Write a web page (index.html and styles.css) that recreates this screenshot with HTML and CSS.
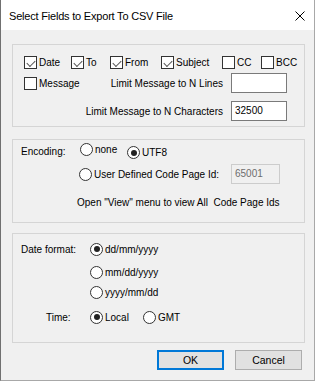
FILE: index.html
```html
<!DOCTYPE html>
<html>
<head>
<meta charset="utf-8">
<link rel="stylesheet" href="styles.css">
</head>
<body>
<div class="window">
  <div class="titlebar">
    <span class="title">Select Fields to Export To CSV File</span>
    <svg class="close" width="10" height="10" viewBox="0 0 10 10"><path d="M0.5 0.5 L9.5 9.5 M9.5 0.5 L0.5 9.5" stroke="#000" stroke-width="1"/></svg>
  </div>
  <div class="content">
    <div class="group g1">
      <div class="row r1">
        <label class="chk w-date"><span class="box on"></span><span>Date</span></label>
        <label class="chk w-to"><span class="box on"></span><span>To</span></label>
        <label class="chk w-from"><span class="box on"></span><span>From</span></label>
        <label class="chk w-subj"><span class="box on"></span><span>Subject</span></label>
        <label class="chk w-cc"><span class="box"></span><span>CC</span></label>
        <label class="chk"><span class="box"></span><span>BCC</span></label>
      </div>
      <div class="row r2">
        <label class="chk"><span class="box"></span><span>Message</span></label>
        <span class="rlabel">Limit Message to N Lines</span>
        <span class="input"></span>
      </div>
      <div class="row r3">
        <span class="rlabel">Limit Message to N Characters</span>
        <span class="input">32500</span>
      </div>
    </div>

    <div class="group g2">
      <div class="row e1">
        <span class="lbl w-enc">Encoding:</span>
        <label class="rad w-none up"><span class="circ"></span><span>none</span></label>
        <label class="rad down"><span class="circ on"></span><span>UTF8</span></label>
      </div>
      <div class="row e2">
        <label class="rad w-user"><span class="circ"></span><span>User Defined Code Page Id:</span></label>
        <span class="input disabled">65001</span>
      </div>
      <div class="row e3">
        <span class="lbl">Open "View" menu to view All&nbsp; Code Page Ids</span>
      </div>
    </div>

    <div class="group g3">
      <div class="row d1">
        <span class="lbl w-df">Date format:</span>
        <label class="rad"><span class="circ on"></span><span>dd/mm/yyyy</span></label>
      </div>
      <div class="row d2">
        <label class="rad"><span class="circ"></span><span>mm/dd/yyyy</span></label>
      </div>
      <div class="row d3">
        <label class="rad"><span class="circ"></span><span>yyyy/mm/dd</span></label>
      </div>
      <div class="row d4">
        <span class="lbl w-time">Time:</span>
        <label class="rad w-local"><span class="circ on"></span><span>Local</span></label>
        <label class="rad"><span class="circ"></span><span>GMT</span></label>
      </div>
    </div>

    <div class="buttons">
      <span class="btn default">OK</span>
      <span class="btn">Cancel</span>
    </div>
  </div>
</div>
</body>
</html>
```

FILE: styles.css
```css
* { box-sizing: border-box; }
html, body { margin: 0; padding: 0; }
body {
  width: 315px;
  height: 381px;
  background: #f0f0f0;
  overflow: hidden;
  font-family: "Liberation Sans", Arial, sans-serif;
  font-size: 10px;
  color: #000;
}
.window {
  width: 315px;
  height: 381px;
  border-left: 1px solid #707070;
  border-right: 1px solid #a8a8a8;
  border-bottom: 1px solid #a8a8a8;
  background: #f0f0f0;
}
.titlebar {
  height: 30px;
  background: #fff;
  display: flex;
  align-items: center;
  padding-left: 8px;
  padding-right: 9px;
}
.title {
  font-size: 11px;
  letter-spacing: -0.2px;
  flex: 1;
  padding-top: 1px;
}
.close { display: block; margin-top: 1px; }
.content {
  padding: 14px 0 0 11px;
}
.group {
  width: 293px;
  border: 1px solid #d5d5d5;
}
.g1 { height: 83px; padding: 7px 17px 0 11px; }
.g2 { height: 84px; margin-top: 12px; padding: 1px 17px 0 8px; }
.g3 { height: 110px; margin-top: 10px; padding: 5px 17px 0 8px; }
.row {
  display: flex;
  align-items: center;
  height: 20px;
  white-space: nowrap;
}
.row > * { flex: none; }
.r2 { margin-top: 1px; }
.r3 { margin-top: 8px; }
.e2 { margin-top: 3px; padding-left: 58px; }
.e3 { margin-top: 8px; padding-left: 56px; }
.d2 { margin-top: 3px; padding-left: 69px; }
.d3 { padding-left: 69px; }
.d4 { margin-top: 5px; }

.chk, .rad { display: flex; align-items: center; }
.box {
  width: 13px; height: 13px;
  border: 1px solid #333;
  background: #fff;
  margin-right: 2px;
  flex: none;
  position: relative;
}
.box.on::after {
  content: "";
  position: absolute;
  left: 2px; top: 1px;
  width: 7px; height: 4px;
  border-left: 1px solid #555;
  border-bottom: 1px solid #555;
  transform: translate(0, 2px) rotate(-45deg);
}
.circ {
  width: 13px; height: 13px;
  border: 1px solid #333;
  border-radius: 50%;
  background: #fff;
  margin-right: 2px;
  flex: none;
  position: relative;
}
.circ.on::after {
  content: "";
  position: absolute;
  left: 2.5px; top: 2.5px;
  width: 6px; height: 6px;
  border-radius: 50%;
  background: #222;
}
.w-date { width: 47px; }
.w-to { width: 39px; }
.w-from { width: 51px; }
.w-subj { width: 61px; }
.w-cc { width: 39px; }

.row > .rlabel { flex: 1; text-align: right; margin-right: 8px; }
.input {
  width: 56px; height: 20px;
  border: 1px solid #7a7a7a;
  background: #fff;
  padding: 3px 0 0 3px;
  line-height: 12px;
}
.input.disabled {
  width: 49px;
  border-color: #cccccc;
  background: #f0f0f0;
  color: #6d6d6d;
}
.w-enc { width: 59px; }
.w-none { width: 47px; }
.up { margin-top: -3px; }
.down { margin-top: 3px; }
.w-user { width: 152px; }
.w-df { width: 69px; }
.w-time { width: 69px; padding-left: 25px; }
.w-local { width: 53px; }

.buttons {
  display: flex;
  justify-content: flex-end;
  gap: 11px;
  margin-top: 7px;
  padding-right: 12px;
}
.btn {
  width: 67px; height: 20px;
  border: 1px solid #adadad;
  background: #e1e1e1;
  display: flex;
  align-items: center;
  justify-content: center;
  font-size: 10.5px;
}
.btn.default { border: 1px solid #0078d7; box-shadow: inset 0 0 0 1px #0078d7; }
```
